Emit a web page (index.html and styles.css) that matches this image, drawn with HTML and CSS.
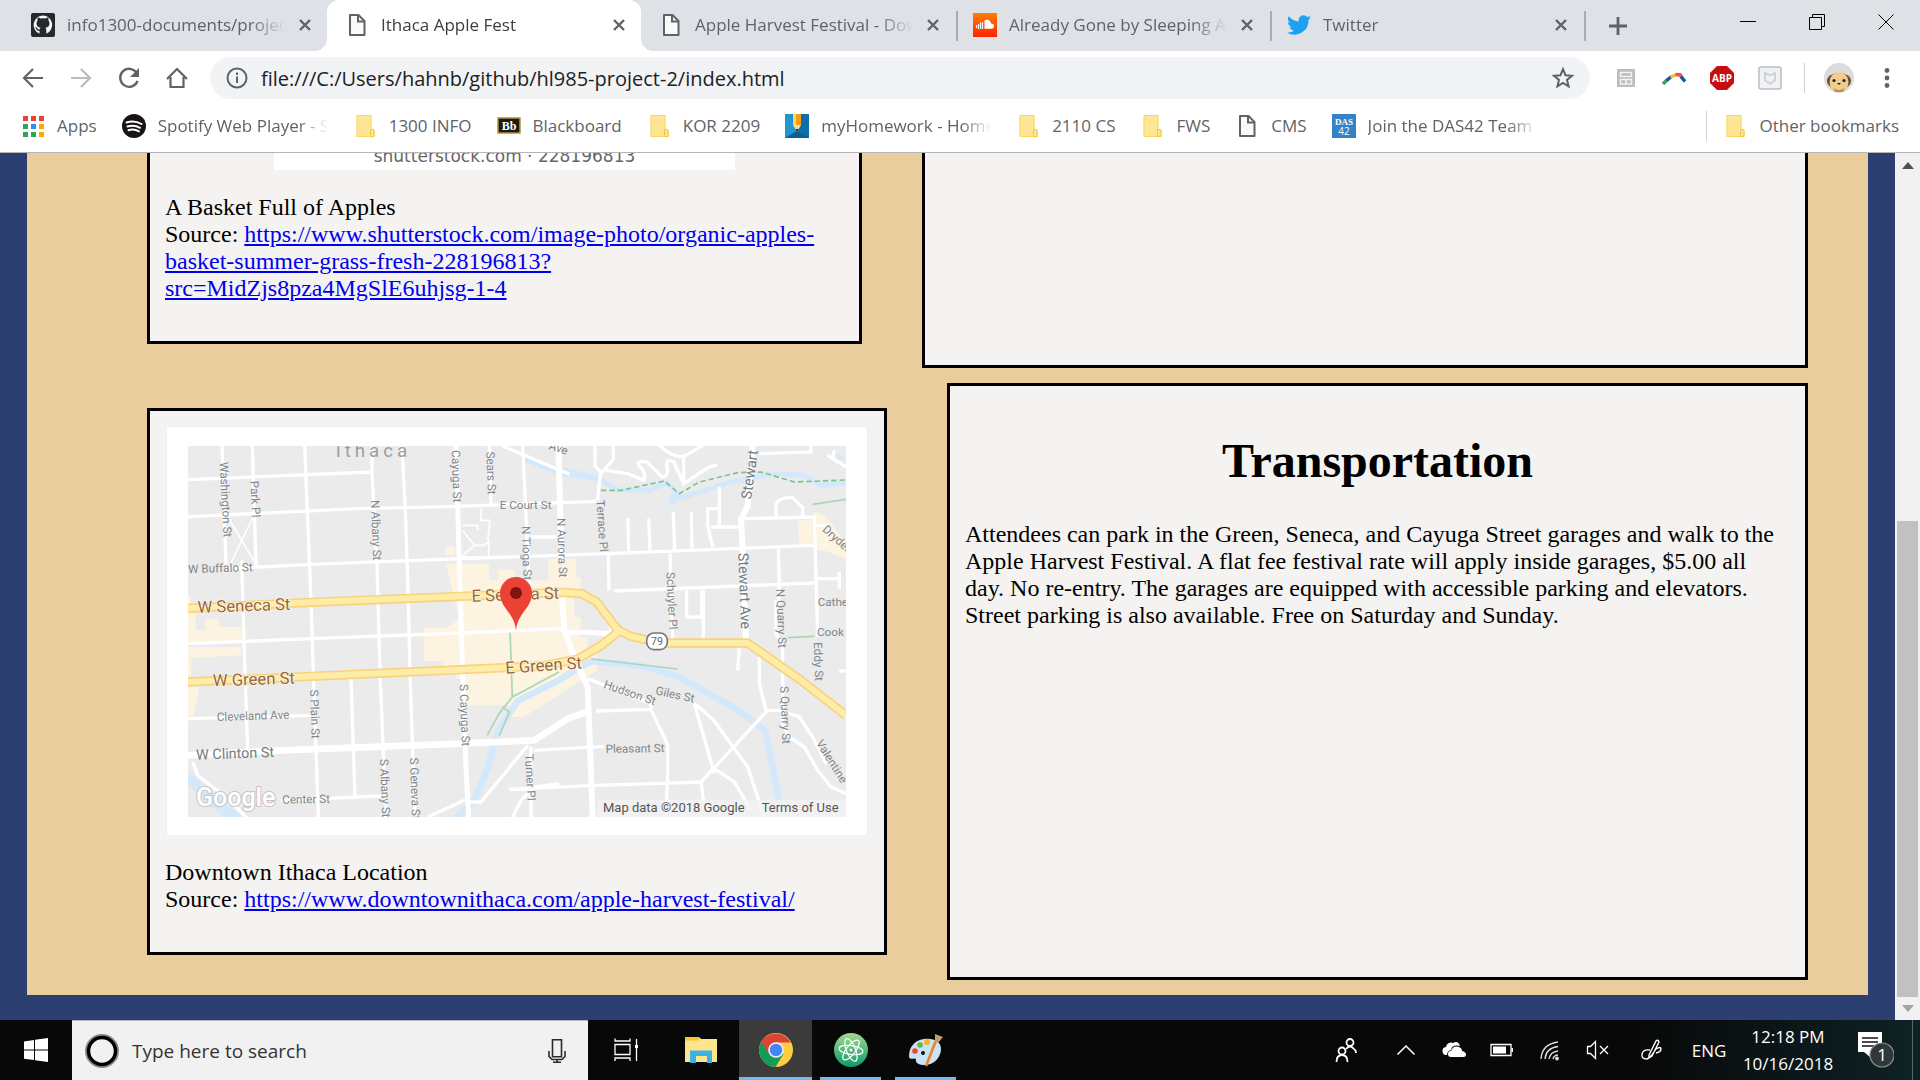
FILE: index.html
```html
<!DOCTYPE html>
<html lang="en">
<head>
<meta charset="utf-8">
<title>Ithaca Apple Fest</title>
<link rel="stylesheet" href="styles.css">
</head>
<body>
<svg class="defs" aria-hidden="true">
  <defs>
    <symbol id="close" viewBox="0 0 16 16"><path d="M3 3l10 10M13 3L3 13" stroke="#5f6368" stroke-width="2.4" fill="none"/></symbol>
    <symbol id="doc" viewBox="0 0 24 24"><path d="M5 2h8.500l6 6v14H5z" fill="#fafafa" stroke="#5f6368" stroke-width="2" stroke-linejoin="round"/><path d="M13 2v6.500h6.500" fill="none" stroke="#5f6368" stroke-width="2"/></symbol>
    <symbol id="folder" viewBox="0 0 24 24"><path d="M4 1.500h14V15l3 2v5.500H4z" fill="#ffe694" stroke="#fbd75b" stroke-width="1.200"/><rect x="17.500" y="15.500" width="3.500" height="7" rx="1" fill="#ffe694" stroke="#eec53c"/></symbol>
  </defs>
</svg>

<header class="browser">
  <div class="tabstrip">
    <div class="tab">
      <svg class="icon" viewBox="0 0 24 24"><rect width="24" height="24" rx="2" fill="#24292e"/><path d="M12 2.500a9.500 9.500 0 0 0-3.500 18.300v-3.100c-2.400.5-3-1-3.500-2.200-.3-.6-1-1-.7-1.200 1-.3 1.700.5 2.200 1.300.6 1 1.500 1 2.300.7.100-.7.400-1.200.8-1.500-2.600-.4-4.100-1.700-4.100-4.500 0-1.200.4-2.100 1.100-2.900-.3-.9-.2-2 .2-2.900 1 0 1.900.5 2.700 1.100a9 9 0 0 1 5 0c.8-.6 1.700-1.100 2.700-1.100.4.9.5 2 .2 2.900.7.800 1.100 1.700 1.100 2.900 0 2.800-1.500 4.100-4.100 4.500.5.500.9 1.200.9 2.300v3.700A9.500 9.500 0 0 0 12 2.500z" fill="#f5f5f5"/></svg>
      <span class="tab-label">info1300-documents/project</span>
      <button class="tab-close" aria-label="Close tab"><svg class="small"><use href="#close"/></svg></button>
    </div>
    <div class="tab active">
      <svg class="icon"><use href="#doc"/></svg>
      <span class="tab-label">Ithaca Apple Fest</span>
      <button class="tab-close" aria-label="Close tab"><svg class="small"><use href="#close"/></svg></button>
    </div>
    <div class="tab divided">
      <svg class="icon"><use href="#doc"/></svg>
      <span class="tab-label">Apple Harvest Festival - Downtown</span>
      <button class="tab-close" aria-label="Close tab"><svg class="small"><use href="#close"/></svg></button>
    </div>
    <div class="tab divided">
      <svg class="icon" viewBox="0 0 24 24"><defs><linearGradient id="sc" x2="0" y2="1"><stop stop-color="#ff8000"/><stop offset="1" stop-color="#ff2200"/></linearGradient></defs><rect width="24" height="24" fill="url(#sc)"/><path d="M11.500 7.500c3-2 6-.2 6.600 3 2 0 3 1 3 2.500s-1 2.800-2.700 2.800h-6.900z" fill="#fff"/><path d="M3.500 12v3M5.500 11v5M7.500 9.500V16M9.500 9v7" stroke="#fff" stroke-width="1.200"/></svg>
      <span class="tab-label">Already Gone by Sleeping At Last</span>
      <button class="tab-close" aria-label="Close tab"><svg class="small"><use href="#close"/></svg></button>
    </div>
    <div class="tab divided">
      <svg class="icon" viewBox="0 0 24 24"><path d="M24 4.600a10 10 0 0 1-2.800.8 5 5 0 0 0 2.100-2.700 10 10 0 0 1-3.100 1.200 4.900 4.900 0 0 0-8.400 4.500A14 14 0 0 1 1.700 3.200a4.900 4.900 0 0 0 1.500 6.500 5 5 0 0 1-2.200-.6c0 2.300 1.600 4.400 3.900 4.900a5 5 0 0 1-2.200.1 4.900 4.900 0 0 0 4.600 3.400A10 10 0 0 1 0 19.500 14 14 0 0 0 21.500 7.100 10 10 0 0 0 24 4.600z" fill="#1da1f2"/></svg>
      <span class="tab-label">Twitter</span>
      <button class="tab-close" aria-label="Close tab"><svg class="small"><use href="#close"/></svg></button>
    </div>
    <button class="newtab" aria-label="New tab"><svg class="icon" viewBox="0 0 24 24"><path d="M12 3v18M3 12h18" stroke="#5f6368" stroke-width="2.800"/></svg></button>
    <div class="window-controls">
      <button aria-label="Minimize"><svg class="small" viewBox="0 0 16 16"><path d="M0 7.500h16" stroke="#000"/></svg></button>
      <button aria-label="Restore"><svg class="small" viewBox="0 0 16 16"><path d="M.5 3.500h12v12H.5zM3.500 3V.5h12v12H13" fill="none" stroke="#000"/></svg></button>
      <button aria-label="Close"><svg class="small" viewBox="0 0 16 16"><path d="M.5.5l15 15M15.500.5l-15 15" stroke="#000"/></svg></button>
    </div>
  </div>

  <div class="toolbar">
    <button class="tool" aria-label="Back"><svg class="icon" viewBox="0 0 24 24"><path d="M22 12H4M12 3l-9 9 9 9" fill="none" stroke="#5f6368" stroke-width="2.200"/></svg></button>
    <button class="tool" aria-label="Forward"><svg class="icon" viewBox="0 0 24 24"><path d="M2 12h18M12 3l9 9-9 9" fill="none" stroke="#babcbe" stroke-width="2.200"/></svg></button>
    <button class="tool" aria-label="Reload"><svg class="icon" viewBox="0 0 24 24"><path d="M19.500 6.500A9 9 0 1 0 20.600 15" fill="none" stroke="#5f6368" stroke-width="2.300"/><path d="M22 2v9h-9z" fill="#5f6368"/></svg></button>
    <button class="tool" aria-label="Home"><svg class="icon" viewBox="0 0 24 24"><path d="M5.500 11v10h13V11M2 13L12 3l10 10" fill="none" stroke="#5f6368" stroke-width="2.200"/></svg></button>
    <div class="omnibox">
      <svg class="icon" viewBox="0 0 24 24"><circle cx="12" cy="12" r="9.500" fill="none" stroke="#5f6368" stroke-width="2"/><path d="M12 10.500V17M12 6.500V9" stroke="#5f6368" stroke-width="2"/></svg>
      <input class="url" type="text" aria-label="Address" value="file:///C:/Users/hahnb/github/hl985-project-2/index.html">
      <button class="star" aria-label="Bookmark this page"><svg class="icon" viewBox="0 0 24 24"><path d="M12 3.200l2.500 6 6.500.5-5 4.200 1.600 6.400L12 16.900l-5.600 3.400L8 13.900 3 9.700l6.500-.5z" fill="none" stroke="#5f6368" stroke-width="2"/></svg></button>
    </div>
    <div class="extensions">
      <button class="tool" aria-label="Reader extension"><svg class="icon" viewBox="0 0 24 24"><rect x="3" y="3" width="18" height="18" fill="#bdbdbd"/><path d="M6.500 6.500h11v4h-11zM6.500 13.500h11v4.500h-11zM12 14v4" fill="none" stroke="#f3f3f3" stroke-width="1.500"/></svg></button>
      <button class="tool" aria-label="Boomerang extension"><svg class="icon" viewBox="0 0 24 24" fill="none" stroke-width="3.500"><path d="M1 18l4-4" stroke="#34a853"/><path d="M4.500 14.500l5-4" stroke="#1259a4"/><path d="M8.500 11l6-2.500" stroke="#fbbc34"/><path d="M13.500 8.500l4.500.2 2 3" stroke="#ea5545"/><path d="M19 10.500l4 5" stroke="#1259a4"/></svg></button>
      <button class="tool" aria-label="Adblock Plus"><svg class="icon" viewBox="0 0 24 24"><path d="M7 0h10l7 7v10l-7 7H7l-7-7V7z" fill="#c70d0d"/><text x="12" y="16" text-anchor="middle" class="abp">ABP</text></svg></button>
      <button class="tool" aria-label="McAfee"><svg class="icon" viewBox="0 0 24 24"><rect x="1" y="1" width="22" height="22" rx="2" fill="#f0f2f3" stroke="#b8bfc6" stroke-width="1.500"/><path d="M7 7l5 2.500L17 7v7.500l-5 3-5-3z" fill="none" stroke="#cfd3d6" stroke-width="2"/></svg></button>
      <span class="bar"></span>
      <button class="tool" aria-label="Profile"><svg class="avatar" viewBox="0 0 30 30"><circle cx="15" cy="15" r="15" fill="#dcdcdc"/><ellipse cx="15" cy="18" rx="12" ry="8" fill="#70502c"/><ellipse cx="15" cy="19" rx="9.500" ry="10" fill="#f1cc91"/><path d="M9 25q6 4 12 0l-2 4h-8z" fill="#c98d3e"/><circle cx="10" cy="17.500" r="1.600" fill="#222"/><circle cx="20" cy="17.500" r="1.600" fill="#222"/><path d="M13 20h4l-2 2z" fill="#222"/></svg></button>
      <button class="tool" aria-label="Menu"><svg class="icon" viewBox="0 0 24 24" fill="#5f6368"><circle cx="12" cy="4.500" r="2.400"/><circle cx="12" cy="12" r="2.400"/><circle cx="12" cy="19.500" r="2.400"/></svg></button>
    </div>
  </div>

  <nav class="bookmarks">
    <a href="#"><svg class="icon" viewBox="0 0 24 24"><path d="M2 2h5v5H2zM10 2h5v5h-5zM18 2h5v5h-5z" fill="#ea4335"/><path d="M2 10h5v5H2zM2 18h5v5H2zM10 18h5v5h-5z" fill="#34a35a"/><path d="M10 10h5v5h-5z" fill="#2a8cf4"/><path d="M18 10h5v5h-5zM18 18h5v5h-5z" fill="#f9ab00"/></svg><span>Apps</span></a>
    <a href="#"><svg class="icon" viewBox="0 0 24 24"><circle cx="12" cy="12" r="12" fill="#191414"/><path d="M4.500 8.500c5-1.500 10.500-1 15 1.500M5.500 12.500c4-1.200 9-.8 12.500 1.300M6.500 16.200c3.500-1 7.300-.6 10.500 1.100" fill="none" stroke="#fff" stroke-width="2" stroke-linecap="round"/></svg><span class="fade">Spotify Web Player - Sign in</span></a>
    <a href="#"><svg class="icon"><use href="#folder"/></svg><span>1300 INFO</span></a>
    <a href="#"><svg class="icon" viewBox="0 0 24 24"><rect x="1" y="4" width="22" height="15" fill="#1c1a17" stroke="#b7913b" stroke-width="1.500"/><text x="12" y="16" text-anchor="middle" class="bb">Bb</text></svg><span>Blackboard</span></a>
    <a href="#"><svg class="icon"><use href="#folder"/></svg><span>KOR 2209</span></a>
    <a href="#"><svg class="icon" viewBox="0 0 24 24"><rect width="24" height="24" fill="#2196d3"/><path d="M12 17l4-4 8 8v3H0z" fill="#0a5f92"/><path d="M16 0h8v24L12 17z" fill="#0d6ea8"/><path d="M8 0h3v11H8z" fill="#ffd54f"/><path d="M11 0h5v11h-5z" fill="#f59c1a"/><path d="M8 11h8l-4 7z" fill="#f3d9b0"/><path d="M10.500 15h3l-1.500 3z" fill="#222"/></svg><span class="fade">myHomework - Home page</span></a>
    <a href="#"><svg class="icon"><use href="#folder"/></svg><span>2110 CS</span></a>
    <a href="#"><svg class="icon"><use href="#folder"/></svg><span>FWS</span></a>
    <a href="#"><svg class="icon"><use href="#doc"/></svg><span>CMS</span></a>
    <a href="#"><svg class="icon" viewBox="0 0 24 24"><rect width="24" height="24" fill="#3583c6"/><text x="12" y="11" text-anchor="middle" class="das">DAS</text><text x="12" y="21" text-anchor="middle" class="das-num">42</text></svg><span class="fade">Join the DAS42 Team - Careers</span></a>
    <span class="bar"></span>
    <a href="#"><svg class="icon"><use href="#folder"/></svg><span>Other bookmarks</span></a>
  </nav>
</header>

<div class="viewport">
  <main class="page">
    <div class="sheet">
      <section class="row first">
        <figure class="card photo">
          <div class="watermark"><span>shutterstock.com · 228196813</span></div>
          <figcaption>A Basket Full of Apples<br>Source: <a href="#">https://www.shutterstock.com/image-photo/organic-apples-basket-summer-grass-fresh-228196813?<wbr>src=MidZjs8pza4MgSlE6uhjsg-1-4</a></figcaption>
        </figure>
        <div class="card"></div>
      </section>
      <section class="row second">
        <figure class="card location">
          <div class="mapframe">
          <svg class="map" viewBox="141 137 1974 1113" role="img" aria-label="Map of downtown Ithaca">
            <rect x="141" y="137" width="1974" height="1113" fill="#ebebeb"/>
            <g fill="#fcf3e1">
              <path d="M912 440h30v25h-30zM915 490h130v50h27v-32h50v32h100v-65h83v55h14v60h-20v60h20v60h20v40h30v60l-220 140h-40v-35h-150v-80h-15v-28h-35v-25h-60v-100h70l35-30zM141 585h8v35h15v70h30v-35h40v25h68v45H141zM141 740h160v25l-150 8v75h20v40l-15 60h-15z"/>
              <path d="M1970 360h45v70h-40zM2020 335l30 10 65 80v52l-60-25-35-5z"/>
            </g>
            <g fill="none" stroke="#d3e9fb" stroke-width="15" stroke-linejoin="round">
              <path d="M1140 172l120 48 110 15 60 33 90 2 60-22 40 45 140-45 130-28 100 5 50 30 75-8"/>
              <path d="M2080 160l35 20M1265 205l120 30" stroke-width="8"/>
              <path d="M1590 310l20-40" stroke-width="26"/>
              <path d="M1350 782l150 14 110 32 180 100 82 62 42 210M1350 782l-100 60-120 60-60 90-30 110-40 100-60 55" stroke-width="20"/>
              <path d="M141 1130l60 60 90 70" stroke-width="34"/>
            </g>
            <g fill="none" stroke="#7fc290" stroke-width="5">
              <path d="M1380 270h60l130-28 45 38 60-35 115-28 70-2 100 30 155-6" stroke-dasharray="16 9"/>
              <path d="M2015 312l100-15M1350 776l260 30M1107 690l7 200-40 50-35 65M1114 890l140-75M1075 1005l30-70-20-15M1940 712l80-4" stroke="#a9d6b4"/>
            </g>
            <g fill="none" stroke="#fff" stroke-width="10">
              <path d="M243 137l12 355M334 137l11 360M491 137l19 463 7 220 15 430M693 137v78l15 275 9 330 18 430M783 137l10 193 9 270 5 220 15 430M302 480l8 280 10 290M1045 137l5 175M1145 137l20 420M630 835l12 355"/>
              <path d="M141 238l552-23M141 349l509-24 300-7 415-15M255 505l255-13 450-17 440-15 620-25M141 730l369-15 450-17 300-13M141 955l374-10M420 1200l300-13M1165 410h85M1420 572l600-24"/>
              <path d="M260 350l90 150M334 355l-65 135M960 470h130M965 390l35 45h30l13-12v45M1000 435l-35 32M1020 325v35h27l-7 60M965 375h45v15" stroke-width="5"/>
              <path d="M1085 137l200 85M1362 137v60l17 18-10 85M1417 137v40l-40 45M1395 210l65 10 48 20q10-20-10-40t20-15l45 45q20 0 15-30t20-15l28 60M1550 130q50 50 85 35l50-30M1628 165v85l60-40q20-15 40-15"/>
              <path d="M1402 460l2 110M1461 353l2 100M1523 355l4 95M1597 335l4 120M1651 335l2 110M1735 260v115M1710 380h100M1735 375v-50h-35v50l15 65M1587 460l8 255M1637 570v80h45v-80M1687 570v150M1905 350v-40q10-20 50-18l30 30v30M1810 355l210-5 10 360M1912 445l3 110-3 60M2015 375h50M2020 535h75v-20 50M1855 160l155-5v-18M2060 165l55 35m-35-50l-5 25"/>
              <path d="M1905 600v100l20 40v230l20 40 45 30 40 70 40 50 45 20M1795 740l-5 70M1855 770v80l20 80h40l60 20 40 60 40 80M1880 930l-200 215-140 5-180 5-255 12M1660 910q60 45 80 80l80 110 50 150M1660 910l60 210M1720 1105l60 40 50 85M1340 835l190 75v18l50 105v80l-5 137M1365 932l165-5M1180 1050l210-12M1680 1145l8 60M1160 1035l-140 170h-35M860 1250l120-55M1170 1040v210M1255 1150l-75 10-40 40-25 50M155 1085l15 40 90 70 60 60M1260 690l150 15M2095 812h20M1415 650l-10 60"/>
            </g>
            <g fill="none" stroke="#fff">
              <path d="M945 137l13 463 7 220 10 280 8 150" stroke-width="15"/>
              <path d="M1252 137l10 350M1262 570l8 120 30 80 40 90 15 390" stroke-width="18"/>
              <path d="M141 1065l279-15 540-20 220-10 100-65 70-25" stroke-width="20"/>
              <path d="M1835 137l-15 180-20 40 5 90 10 280" stroke-width="18"/>
              <path d="M1270 700l60-5 90 5-30 35" stroke-width="14"/>
            </g>
            <g fill="none" stroke-linejoin="round">
              <path d="M141 624l369-18 450-18 302-12 60 4 45 25 63 83 40 20 90 20h260l160 112 135 105M141 845l369-17 450-20 250-12 100-20 70-40 50-40" stroke="#f8d27c" stroke-width="28"/>
              <path d="M141 624l369-18 450-18 302-12 60 4 45 25 63 83 40 20 90 20h260l160 112 135 105M141 845l369-17 450-20 250-12 100-20 70-40 50-40" stroke="#ffeca6" stroke-width="18"/>
            </g>
            <g class="road">
              <text transform="translate(236 186) rotate(87)">Washington St</text>
              <text transform="translate(328 242) rotate(87)">Park Pl</text>
              <text transform="translate(690 300) rotate(88)">N Albany St</text>
              <text transform="translate(932 150) rotate(88)">Cayuga St</text>
              <text transform="translate(1036 154) rotate(88)">Sears St</text>
              <text transform="translate(1142 378) rotate(88)">N Tioga St</text>
              <text transform="translate(1248 354) rotate(88)">N Aurora St</text>
              <text transform="translate(1366 300) rotate(86)">Terrace Pl</text>
              <text transform="translate(1576 516) rotate(87)">Schuyler Pl</text>
              <text transform="translate(1906 566) rotate(88)">N Quarry St</text>
              <text transform="translate(1918 858) rotate(88)">S Quarry St</text>
              <text transform="translate(2018 726) rotate(88)">Eddy St</text>
              <text transform="translate(507 868) rotate(88)">S Plain St</text>
              <text transform="translate(956 852) rotate(88)">S Cayuga St</text>
              <text transform="translate(717 1076) rotate(88)">S Albany St</text>
              <text transform="translate(807 1072) rotate(88)">S Geneva St</text>
              <text transform="translate(1152 1062) rotate(87)">Turner Pl</text>
              <text transform="translate(2024 1028) rotate(58)">Valentine</text>
              <text transform="translate(2042 390) rotate(42)">Dryden</text>
              <text transform="translate(1222 146) rotate(18)">Ave</text>
              <text x="1076" y="325">E Court St</text>
              <text transform="translate(142 519) rotate(-2)">W Buffalo St</text>
              <text transform="translate(228 962) rotate(-2)">Cleveland Ave</text>
              <text transform="translate(424 1210) rotate(-1)">Center St</text>
              <text transform="translate(1394 1058) rotate(-1)">Pleasant St</text>
              <text transform="translate(1386 862) rotate(19)">Hudson St</text>
              <text transform="translate(1542 882) rotate(12)">Giles St</text>
              <text x="2030" y="618">Cathe</text>
              <text x="2028" y="708">Cook</text>
            </g>
            <g class="avenue">
              <text transform="translate(1830 298) rotate(-82)">Stewart</text>
              <text transform="translate(1792 458) rotate(88)">Stewart Ave</text>
              <text transform="translate(166 1078) rotate(-2)">W Clinton St</text>
            </g>
            <g class="highway">
              <text transform="translate(170 638) rotate(-2)">W Seneca St</text>
              <text transform="translate(216 858) rotate(-2)">W Green St</text>
              <text transform="translate(992 604) rotate(-2)">E Seneca St</text>
              <text transform="translate(1094 820) rotate(-4)">E Green St</text>
            </g>
            <text x="584" y="171" class="city">Ithaca</text>
            <rect x="1517" y="698" width="62" height="50" rx="22" fill="#fff" stroke="#777" stroke-width="5"/>
            <text x="1548" y="735" text-anchor="middle" class="shield">79</text>
            <path d="M1125 692c-4-55-48-68-48-114a48 48 0 0 1 96 0c0 46-44 59-48 114z" fill="#ea4335"/>
            <circle cx="1125" cy="578" r="18" fill="#811411"/>
            <text x="165" y="1218" class="logo">Google</text>
            <rect x="1370" y="1198" width="745" height="52" fill="#f2f2f2" opacity=".8"/>
            <g class="legal"><text x="1386" y="1236">Map data ©2018 Google</text><text x="1862" y="1236">Terms of Use</text></g>
          </svg>
          </div>
          <figcaption>Downtown Ithaca Location<br>Source: <a href="#">https://www.downtownithaca.com/apple-harvest-festival/</a></figcaption>
        </figure>
        <article class="card transport">
          <h1>Transportation</h1>
          <p>Attendees can park in the Green, Seneca, and Cayuga Street garages and walk to the Apple Harvest Festival. A flat fee festival rate will apply inside garages, $5.00 all day. No re-entry. The garages are equipped with accessible parking and elevators. Street parking is also available. Free on Saturday and Sunday.</p>
        </article>
      </section>
    </div>
  </main>
  <div class="scrollbar">
    <button aria-label="Scroll up"><svg class="arrow" viewBox="0 0 12 8"><path d="M0 8l6-7 6 7z" fill="#505050"/></svg></button>
    <div class="track"><div class="thumb"></div></div>
    <button aria-label="Scroll down"><svg class="arrow" viewBox="0 0 12 8"><path d="M0 0h12L6 7z" fill="#a3a3a3"/></svg></button>
  </div>
</div>

<footer class="taskbar">
  <button class="start" aria-label="Start"><svg class="icon" viewBox="0 0 24 24"><path d="M0 3.500L10 2v9.500H0zM11 1.800L24 0v11.500H11zM0 12.500h10V22L0 20.700zM11 12.500h13V24l-13-1.800z" fill="#fff"/></svg></button>
  <label class="search">
    <svg class="ring" viewBox="0 0 34 34"><circle cx="17" cy="17" r="15.500" fill="none" stroke="#8a8a8a" stroke-width="3"/><circle cx="17" cy="17" r="13.500" fill="none" stroke="#000" stroke-width="3.500"/></svg>
    <input type="text" placeholder="Type here to search" aria-label="Search">
    <svg class="icon" viewBox="0 0 24 24"><path d="M7.500.8h9v17h-9zM4 12v5.500l3 3h10l3-3V12M12 20.500V23M8 23.200h8" fill="none" stroke="#2b2b2b" stroke-width="1.600"/></svg>
  </label>
  <div class="apps">
    <button aria-label="Task view"><svg class="icon" viewBox="2 0 24 24" fill="none" stroke="#fff" stroke-width="1.300"><path d="M3 6.500h15v10H3zM3 .5V3h15V.5M3 23v-3h15v3M24.500 1v22"/><path d="M23 7h3v3h-3z" fill="#fff" stroke="none"/></svg></button>
    <button aria-label="File Explorer"><svg class="app" viewBox="0 0 34 34"><path d="M1 4h14l2 2h16v23H1z" fill="#ffe48e"/><path d="M1 4h14v3.500H1z" fill="#fbc531"/><path d="M6 30V17.500h22V30h-5v-7H12v7z" fill="#3cb1e6"/></svg></button>
    <button class="current running" aria-label="Chrome"><svg class="app" viewBox="0 0 34 34"><circle cx="17" cy="17" r="17" fill="#ffcd40"/><path d="M2.300 8.500A17 17 0 0 0 16.500 34l8-13z" fill="#0f9d58"/><path d="M2.300 8.500A17 17 0 0 1 31.700 9.500H17L9 20z" fill="#db4437"/><circle cx="17" cy="17" r="7.800" fill="#f1f1f1"/><circle cx="17" cy="17" r="6.200" fill="#4285f4"/></svg></button>
    <button class="running inset" aria-label="Atom"><svg class="app" viewBox="0 0 34 34"><defs><linearGradient id="at" x2="0" y2="1"><stop stop-color="#a5d991"/><stop offset="1" stop-color="#0a9b68"/></linearGradient></defs><circle cx="17" cy="17" r="17" fill="url(#at)"/><g fill="none" stroke="#fff" stroke-width="1.200"><ellipse cx="17" cy="17" rx="12" ry="4.500" transform="rotate(8 17 17)"/><ellipse cx="17" cy="17" rx="12" ry="4.500" transform="rotate(68 17 17)"/><ellipse cx="17" cy="17" rx="12" ry="4.500" transform="rotate(128 17 17)"/></g><circle cx="17" cy="17" r="1.500" fill="#fff"/></svg></button>
    <button class="running inset" aria-label="Paint"><svg class="app" viewBox="0 0 34 34"><path d="M15 6C5 7 0 15 0 23c0 5 5 1 7 3-1 4 3 6 9 6 10 0 16-9 16-16S26 5 15 6z" fill="#c9e2f4"/><circle cx="14" cy="20" r="2" fill="#111"/><circle cx="6" cy="18" r="2.800" fill="#e5483f"/><circle cx="11" cy="12" r="2.800" fill="#63b944"/><circle cx="18" cy="9" r="3" fill="#f8b42a"/><path d="M28 5L17 33" stroke="#e8842a" stroke-width="2.600"/><path d="M26 1l8 3-5 6-3-2z" fill="#c69b6d"/></svg></button>
  </div>
  <div class="tray">
    <button class="wide" aria-label="People"><svg class="icon" viewBox="0 0 24 24" fill="none" stroke="#fff" stroke-width="1.800"><circle cx="16" cy="4.500" r="3.500"/><path d="M12 11q4-5 8 0 2 1 2 4"/><circle cx="8" cy="13" r="3.500"/><path d="M2.500 24q0-7 5.500-7t5.500 7"/></svg></button>
    <button aria-label="Show hidden icons"><svg class="icon" viewBox="0 0 24 24"><path d="M3.500 16.500L12 8l8.500 8.500" fill="none" stroke="#fff" stroke-width="1.500"/></svg></button>
    <button aria-label="OneDrive"><svg class="icon" viewBox="0 0 24 24"><path d="M5 17a4 4 0 0 1-1-8 5 5 0 0 1 7-4q5-3 7 3-8-2-9 4-4 1-4 5z" fill="#fff"/><path d="M9 19a3 3 0 0 1 0-6q2-6 8-4 3 1 3 4 4 1 4 3.500T21 19z" fill="#fff"/></svg></button>
    <button aria-label="Battery"><svg class="icon" viewBox="0 0 24 24"><path d="M1 6.500h20v11H1z" fill="none" stroke="#fff" stroke-width="1.300"/><path d="M3 8.500h13v7H3zM21.500 10H23v4h-1.500z" fill="#fff"/></svg></button>
    <button aria-label="Wi-Fi"><svg class="icon" viewBox="0 0 24 24" fill="none" stroke="#ddd" stroke-width="1.400"><path d="M3 21Q4 6 20 4M7 21Q8 10 20 8.500M11 21Q12 14 20 13M15 21q1-4 5-4"/><circle cx="19" cy="20.500" r="1.200" fill="#fff"/></svg></button>
    <button aria-label="Volume"><svg class="icon" viewBox="0 0 24 24" fill="none" stroke="#fff" stroke-width="1.300"><path d="M1.500 8.500h3l5-5v17l-5-5h-3zM14 8l8 8M22 8l-8 8"/></svg></button>
    <button class="pen" aria-label="Windows Ink"><svg class="icon" viewBox="0 0 24 24" fill="none" stroke="#fff" stroke-width="1.400"><path d="M9 17L16 3q2-2 3 1l-7 14-3 2zM10 12q-7-1-8 4t5 5q4-2 9-10 5-3 5 0t-5 4"/></svg></button>
    <span class="lang">ENG</span>
    <div class="clock"><time>12:18 PM</time><time>10/16/2018</time></div>
    <button class="wide" aria-label="Notifications"><svg class="notes" viewBox="0 0 36 36"><path d="M0 0h24v20H12v5l-6-5H0z" fill="#fff"/><path d="M4 6h16M4 10h16M4 14h12" stroke="#111" stroke-width="1.300"/><circle cx="24" cy="23" r="12" fill="#30383a" stroke="#8b8f90" stroke-width="1.200"/><text x="24" y="29" text-anchor="middle" class="count">1</text></svg></button>
    <span class="desk"></span>
  </div>
</footer>
</body>
</html>
```
FILE: styles.css
```css
* { box-sizing: border-box; }

body {
  margin: 0;
  height: 100vh;
  display: flex;
  flex-direction: column;
  overflow: hidden;
  font-family: "Open Sans", sans-serif;
  font-size: 17px;
  color: #5f6368;
}

button {
  border: 0;
  padding: 0;
  margin: 0;
  background: none;
  display: flex;
  align-items: center;
  justify-content: center;
  font: inherit;
}

input {
  border: 0;
  padding: 0;
  background: none;
  outline: 0;
  min-width: 0;
  flex: 1;
  font: inherit;
  font-size: 19px;
}

svg { display: block; flex: none; }
.defs { position: absolute; width: 0; height: 0; }
.icon { width: 24px; height: 24px; }
.small { width: 16px; height: 16px; }
.app { width: 34px; height: 34px; }

/* Browser frame */
.browser { flex: none; background: #fff; border-bottom: 1px solid #b6b4b6; }

.tabstrip {
  display: flex;
  height: 51px;
  padding-left: 13px;
  background: #dee1e6;
}

.tab {
  display: flex;
  align-items: center;
  gap: 12px;
  flex: 0 1 314px;
  min-width: 0;
  padding: 0 14px 2px 18px;
  position: relative;
}

.tab-label {
  flex: 1;
  min-width: 0;
  overflow: hidden;
  white-space: nowrap;
  line-height: 24px;
  mask-image: linear-gradient(to right, #000 calc(100% - 36px), transparent);
}

.tab-close { width: 16px; height: 24px; }

.tab.active {
  background: #fff;
  border-radius: 12px 12px 0 0;
  color: #3c4043;
}

.tab.active::before,
.tab.active::after {
  content: "";
  position: absolute;
  bottom: 0;
  width: 12px;
  height: 12px;
}
.tab.active::before { left: -12px; background: radial-gradient(circle at 0 0, transparent 12px, #fff 12px); }
.tab.active::after { right: -12px; background: radial-gradient(circle at 100% 0, transparent 12px, #fff 12px); }

.tab.divided::after {
  content: "";
  position: absolute;
  right: -3px;
  top: 11px;
  width: 2px;
  height: 30px;
  background: #a9acb1;
}

.newtab { width: 70px; }
.window-controls { display: flex; margin-left: auto; height: 44px; }
.window-controls button { width: 69px; }

.toolbar {
  display: flex;
  align-items: center;
  height: 54px;
  padding: 0 9px;
}

.tool { width: 48px; height: 42px; }
.avatar { width: 30px; height: 30px; }

.omnibox {
  flex: 1;
  display: flex;
  align-items: center;
  gap: 12px;
  height: 42px;
  margin: 0 12px 0 9px;
  padding: 0 15px;
  border-radius: 21px;
  background: #f1f3f4;
}
.url { color: #202124; font-size: 20px; }
.extensions { display: flex; align-items: center; }
.bar { width: 1px; height: 30px; background: #cfd1d4; }
.extensions .bar { margin: 0 10px; }

.bookmarks {
  display: flex;
  align-items: center;
  gap: 25px;
  height: 47px;
  padding: 0 21px 6px;
}
.bookmarks a {
  display: flex;
  align-items: center;
  gap: 12px;
  color: inherit;
  text-decoration: none;
  white-space: nowrap;
}
.bookmarks .fade {
  width: 170px;
  overflow: hidden;
  mask-image: linear-gradient(to right, #000 calc(100% - 30px), transparent);
}
.bookmarks .bar { margin-left: auto; }
.bookmarks .bar + a { margin-left: -9px; }

.abp { font: bold 10px "Open Sans", sans-serif; fill: #fff; }
.bb { font: bold 12px "Liberation Serif", serif; fill: #fff; }
.das { font: bold 9px "Liberation Serif", serif; fill: #fff; }
.das-num { font: 10px "Open Sans", sans-serif; fill: #fff; }

/* Festival page */
.viewport { flex: 1; min-height: 0; display: flex; }

.page {
  flex: 1;
  min-width: 0;
  overflow: hidden;
  padding: 0 27px 25px;
  background: #2d3e71;
  color: #000;
  font: 24px/27px "Liberation Serif", serif;
}

.sheet {
  display: flex;
  flex-direction: column;
  gap: 15px;
  padding: 0 60px 15px 120px;
  background: #e9cd9c;
}

.row { display: grid; column-gap: 60px; }
.first { grid-template-columns: 715fr 886fr; }
.second { grid-template-columns: 740fr 861fr; }

.card {
  min-width: 0;
  margin: 0;
  padding: 15px;
  border: 3px solid #000;
  background: #f4f3f1;
}
.card a { color: #00e; }

.first .card { border-top: 0; padding-top: 0; }
.photo.card { margin-bottom: 24px; }
.location { align-self: center; }
.transport { min-height: 597px; }

figcaption { margin: 24px 0; }

.watermark {
  display: flex;
  justify-content: center;
  align-items: flex-end;
  width: 68%;
  height: 17px;
  margin: 0 auto;
  padding-bottom: 4px;
  overflow: hidden;
  background: #fff;
  color: #666;
  font: 17px/20px "DejaVu Sans", sans-serif;
}

.mapframe {
  margin: 0 1px;
  padding: 19px 21px 18px;
  background: #fff;
  border: 1px solid #eceef0;
  border-bottom: 0;
}
.map { width: 100%; height: auto; }
.map text { font-family: Roboto, sans-serif; }
.road { font-size: 35px; fill: #80868b; }
.avenue { font-size: 43px; fill: #737a80; }
.highway { font-size: 50px; fill: #946848; stroke: #fff6dc; stroke-width: 5px; paint-order: stroke; }
.city { font-size: 56px; fill: #9aa0a8; letter-spacing: 12px; }
.shield { font-size: 32px; fill: #666; }
.logo { font-size: 75px; font-weight: 500; fill: #fff; stroke: #c4c4c4; stroke-width: 6px; paint-order: stroke; }
.legal { font-size: 39px; fill: #555; }

h1 { margin: 32px 0; font-size: 48px; line-height: 56px; text-align: center; }
p { margin: 0; }

.scrollbar {
  width: 25px;
  display: flex;
  flex-direction: column;
  padding: 0 2px;
  background: #f1f1f1;
}
.scrollbar button { height: 23px; }
.arrow { width: 12px; height: 8px; }
.track { flex: 1; display: flex; flex-direction: column; justify-content: flex-end; }
.thumb { height: 58%; background: #c1c1c1; }

/* Taskbar */
.taskbar {
  flex: none;
  display: flex;
  height: 60px;
  background: linear-gradient(to right, #080808 85%, #0b1416 92%, #0e2225);
  color: #fff;
}
.start { width: 72px; }
.search {
  flex: 0 1 516px;
  display: flex;
  align-items: center;
  gap: 13px;
  padding: 0 19px 0 13px;
  border-top: 1px solid #b5b5b5;
  background: #f1f1f1;
}
.search input { color: #333; }
.search input::placeholder { color: #333; opacity: 1; }
.ring { width: 34px; height: 34px; }

.apps { display: flex; gap: 2px; margin-left: 1px; }
.apps button { width: 73px; position: relative; }
.apps .current { background: #3b3b3b; }
.apps .running::after {
  content: "";
  position: absolute;
  bottom: 0;
  left: 0;
  right: 0;
  height: 3px;
  background: #76b9ed;
}
.apps .inset::after { left: 6px; right: 6px; }

.tray { display: flex; align-items: center; margin-left: auto; }
.tray button { width: 48px; height: 60px; }
.tray .wide { width: 72px; }
.tray .pen { width: 60px; }
.lang { width: 54px; text-align: center; }
.clock { width: 104px; display: flex; flex-direction: column; align-items: center; line-height: 27px; }
.notes { width: 36px; height: 36px; }
.count { font: 17px "Open Sans", sans-serif; fill: #fff; }
.desk { width: 8px; height: 60px; border-left: 1px solid #5c6668; }
```
